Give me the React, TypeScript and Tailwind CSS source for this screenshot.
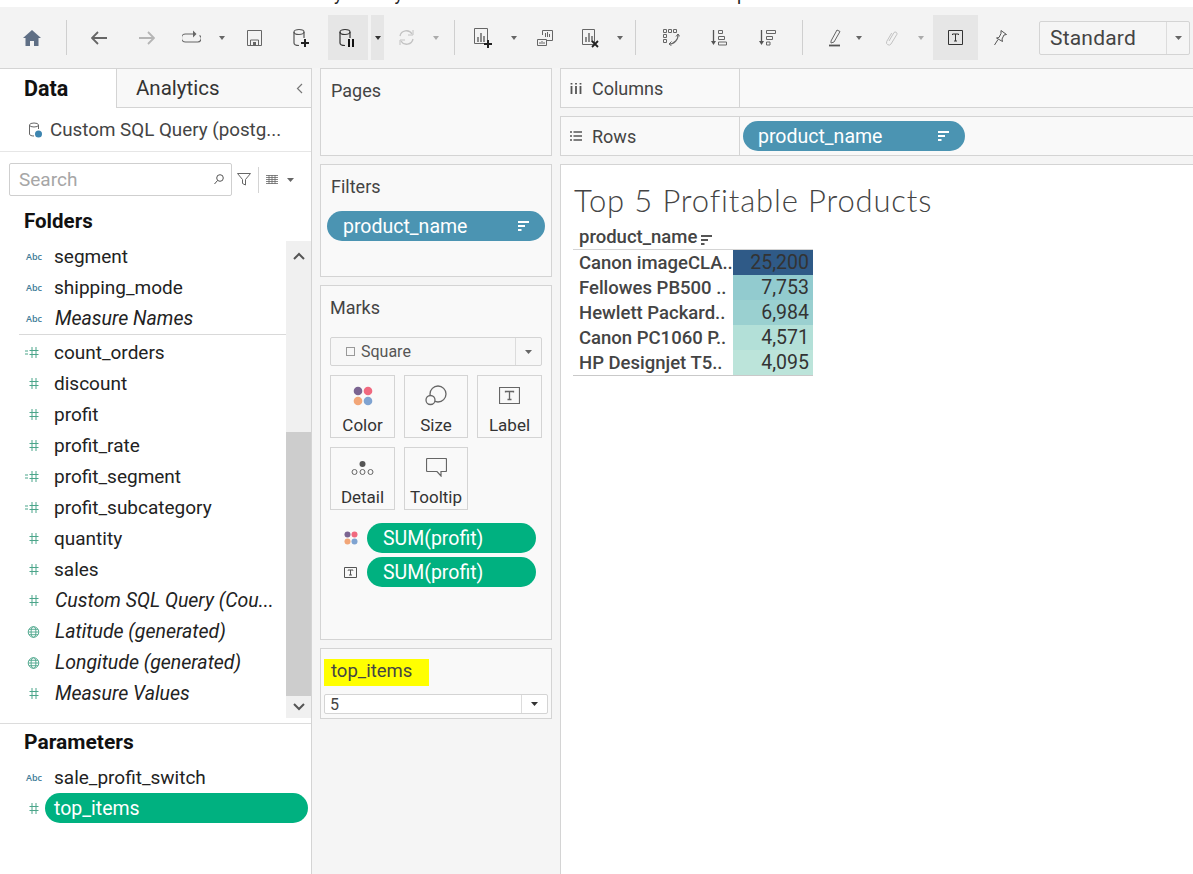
import React from "react";

const font = "font-['Roboto',sans-serif]";

function Caret({ className = "", dark = false, small = false }: { className?: string; dark?: boolean; small?: boolean }) {
  return (
    <div className={`flex items-center justify-center ${className}`}>
      <svg width={small ? 6 : 7} height={small ? 4 : 4} viewBox="0 0 8 5" preserveAspectRatio="none">
        <path d="M0 0h8L4 5z" fill={dark ? "#333" : "#666"} />
      </svg>
    </div>
  );
}

function Sep({ className = "" }: { className?: string }) {
  return <div className={`w-px h-[35px] bg-[#cfcfcf] ${className}`} />;
}

function Tb({ className = "", children }: { className?: string; children: React.ReactNode }) {
  return <div className={`flex items-center justify-center h-[45px] shrink-0 ${className}`}>{children}</div>;
}

function Db({ color = "#555" }: { color?: string }) {
  return (
    <>
      <ellipse cx="7" cy="4" rx="5" ry="2.5" fill="none" stroke={color} strokeWidth="1.2" />
      <path d="M2 4v11c0 1.5 2 2.5 5 2.5M12 4v6" fill="none" stroke={color} strokeWidth="1.2" />
    </>
  );
}

function Toolbar() {
  return (
    <div className="flex items-center h-[61px] bg-[#f3f3f3] shrink-0">
      <Tb className="w-[40px] ml-[12px]">
        <svg width="18" height="16" viewBox="0 0 18 16"><path d="M9 0L0 8h2.5v8h4.5v-5h4v5h4.5V8H18z" fill="#5f6f85" /></svg>
      </Tb>
      <Sep className="ml-[14px]" />
      <Tb className="w-[40px] ml-[12px]">
        <svg width="16" height="14" viewBox="0 0 16 14"><path d="M7 1L1 7l6 6M1 7h15" fill="none" stroke="#666" strokeWidth="1.8" /></svg>
      </Tb>
      <Tb className="w-[40px] ml-[8px]">
        <svg width="16" height="14" viewBox="0 0 16 14"><path d="M9 1l6 6-6 6M15 7H0" fill="none" stroke="#b5b5b5" strokeWidth="1.8" /></svg>
      </Tb>
      <Tb className="w-[40px] ml-[4px]">
        <svg width="19" height="13" viewBox="0 0 19 13" className="mb-[3px]"><path d="M11 4H3.500a3.500 3.500 0 0 0 0 8h12a3.500 3.500 0 0 0 2-6.500" fill="none" stroke="#666" strokeWidth="1.1" /><path d="M11 .5L14.500 4 11 7.500z" fill="#666" /></svg>
      </Tb>
      <Caret className="w-[16px] ml-[3px]" small />
      <Tb className="w-[40px] ml-[4px]">
        <svg width="15" height="16" viewBox="0 0 15 16"><path d="M.5.5h14v15H.5z" fill="none" stroke="#666" /><path d="M3.5 15.5V10h8v5.5" fill="none" stroke="#666" /><path d="M6 12h3v3.5H6z" fill="#666" /></svg>
      </Tb>
      <Tb className="w-[40px] ml-[8px]">
        <svg width="20" height="20" viewBox="0 0 20 20"><Db /><path d="M9 15h8M13 11v8" stroke="#222" strokeWidth="2" /></svg>
      </Tb>
      <Tb className="w-[40px] ml-[6px] bg-[#e6e6e6]">
        <svg width="20" height="20" viewBox="0 0 20 20"><Db color="#333" /><path d="M10 11h2v8h-2zM14 11h2v8h-2z" fill="#111" /></svg>
      </Tb>
      <Caret className="w-[13px] h-[45px] ml-[3px] bg-[#e6e6e6]" dark small />
      <Tb className="w-[40px] ml-[2px]">
        <svg width="17" height="17" viewBox="0 0 17 17"><path d="M2 7a6.5 6.5 0 0 1 12-2M15 10a6.5 6.5 0 0 1-12 2" fill="none" stroke="#c2c2c2" strokeWidth="1.3" /><path d="M15 1v5h-5M2 16v-5h5" fill="none" stroke="#c2c2c2" strokeWidth="1" /></svg>
      </Tb>
      <Caret className="w-[16px] ml-[2px] opacity-50" small />
      <Sep className="ml-[10px]" />
      <Tb className="w-[40px] ml-[10px]">
        <svg width="22" height="20" viewBox="0 0 22 20"><path d="M.5.5h13v15H.5z" fill="none" stroke="#666" /><path d="M4 9v5M7 5v9M10 8v6" stroke="#555" strokeWidth="1.3" /><path d="M10 16h8M14 12v8" stroke="#222" strokeWidth="2" /></svg>
      </Tb>
      <Caret className="w-[16px] ml-[1px]" small />
      <Tb className="w-[40px] ml-[3px]">
        <svg width="16" height="16" viewBox="0 0 16 16"><path d="M5.5 5V.5h10v10H10" fill="#f3f3f3" stroke="#666" /><path d="M.5 9.5h9v6h-9z" fill="none" stroke="#666" /><path d="M8.5 7V3M10.5 7V2M12.5 7V4M3 14v-2M5 14v-3M7 14v-2" stroke="#666" /></svg>
      </Tb>
      <Tb className="w-[40px] ml-[7px]">
        <svg width="20" height="20" viewBox="0 0 20 20"><path d="M.5 1.500h12v15H.5z" fill="none" stroke="#666" /><path d="M4 9v5M7 5v9M10 8v6" stroke="#555" strokeWidth="1.3" /><path d="M10 13l6 6M16 13l-6 6" stroke="#222" strokeWidth="1.8" /></svg>
      </Tb>
      <Caret className="w-[16px]" small />
      <Sep className="ml-[7px]" />
      <Tb className="w-[40px] ml-[15px]">
        <svg width="17" height="17" viewBox="0 0 17 17" fill="none" stroke="#666"><path d="M.5.500h3v3h-3zM5.500.500h3v3h-3zM10.500.500h3v3h-3zM.5 5.500h3v3h-3zM.5 10.500h3v3h-3z" /><path d="M15 5a9 9 0 0 1-9 10" strokeWidth="1.200" /><path d="M13 7.500L15 5l1.800 2.500M8.500 12.500L6 15l2.500 1.800" /></svg>
      </Tb>
      <Tb className="w-[40px] ml-[8px]">
        <svg width="16" height="16" viewBox="0 0 16 16"><path d="M2.500 0v13" stroke="#555" strokeWidth="1.300" /><path d="M0 11h5l-2.500 4z" fill="#555" /><path d="M7.500.5h4v3h-4zM7.500 6.500h6v3h-6zM7.500 12h8v3h-8z" fill="none" stroke="#666" /></svg>
      </Tb>
      <Tb className="w-[40px] ml-[8px]">
        <svg width="17" height="16" viewBox="0 0 17 16"><path d="M2.500 0v13" stroke="#555" strokeWidth="1.300" /><path d="M0 11h5l-2.500 4z" fill="#555" /><path d="M7.500.5h9v3h-9zM7.500 6.500h6v3h-6zM7.500 12h3.500v3H7.500z" fill="none" stroke="#666" /></svg>
      </Tb>
      <Sep className="ml-[15px]" />
      <Tb className="w-[32px] ml-[16px]">
        <svg width="12" height="18" viewBox="0 0 12 18"><path d="M2 12L8 1l3 1.500L5 13l-3 1z" fill="none" stroke="#666" /><path d="M0 16.500h11" stroke="#555" strokeWidth="1.800" /></svg>
      </Tb>
      <Caret className="w-[16px]" small />
      <Tb className="w-[32px] ml-[9px]">
        <svg width="12" height="16" viewBox="0 0 12 16"><path d="M3 11l5-8.500a1.800 1.800 0 0 1 3 1.700L5 14a2.500 2.500 0 0 1-4.300-2.500l5-8.500" fill="none" stroke="#c2c2c2" /></svg>
      </Tb>
      <Caret className="w-[16px] ml-[5px] opacity-50" small />
      <Tb className="w-[45px] ml-[4px] bg-[#e6e6e6]">
        <svg width="15" height="15" viewBox="0 0 15 15"><path d="M.5.5h14v14H.5z" fill="none" stroke="#333" /><path d="M4.500 5V4h6v1M7.500 4v7M6 11h3" fill="none" stroke="#333" /></svg>
      </Tb>
      <Tb className="w-[40px] ml-[2px]">
        <svg width="13" height="16" viewBox="0 0 13 16"><path d="M7 .5l5.500 4-2.500.5-2 4 .5 2.500L2.500 8l2.500-.5 2-4z" fill="none" stroke="#555" /><path d="M4 9.500L.5 15" stroke="#555" /></svg>
      </Tb>
      <div className="flex items-center w-[151px] h-[34px] ml-[19px] mt-[1px] border border-[#d4d4d4] rounded-[2px] bg-[#f5f5f5] shrink-0">
        <span className="flex-1 pl-[10px] pt-[1px] text-[21px] text-[#444] tracking-[0.2px]">Standard</span>
        <Caret className="w-[23px] h-full border-l border-[#dcdcdc]" />
      </div>
    </div>
  );
}

function AbcIcon() {
  return <span className="text-[9px] font-semibold text-[#3f7c98] font-['Open_Sans',sans-serif] w-[30px] pl-[2px] shrink-0">Abc</span>;
}

function HashIcon({ dashed = false }: { dashed?: boolean }) {
  return (
    <svg width="30" height="11" viewBox="0 0 30 11" className="shrink-0">
      {dashed && <path d="M1 4h3M1 7h3" stroke="#4ba58a" />}
      <path d="M6 0v11M10 0v11M3.500 3.500h9M3.500 7.500h9" stroke="#4ba58a" transform="translate(2 0)" />
    </svg>
  );
}

function GlobeIcon() {
  return (
    <svg width="30" height="12" viewBox="0 0 30 12" className="shrink-0">
      <g fill="none" stroke="#4ba58a" strokeWidth="0.9">
        <circle cx="9.500" cy="6" r="5.300" />
        <ellipse cx="9.500" cy="6" rx="2.400" ry="5.300" />
        <path d="M4.200 6h10.600M5 3.300h9M5 8.700h9" />
      </g>
    </svg>
  );
}

function Field({ icon, label, italic = false }: { icon: React.ReactNode; label: string; italic?: boolean }) {
  return (
    <div className="flex items-center h-[31px] pl-[24px]">
      {icon}
      <span className={`pt-[1px] text-[#222] whitespace-nowrap ${italic ? "italic text-[19.5px] pl-[1px]" : "text-[19px]"}`}>{label}</span>
    </div>
  );
}

function DataPane() {
  return (
    <div className="flex flex-col w-[312px] shrink-0 bg-white border-r border-[#d4d4d4]">
      <div className="flex h-[40px] border-t border-[#d4d4d4] shrink-0">
        <div className="w-[116px] pl-[24px] pt-[1px] flex items-center font-bold text-[21.5px] text-[#111]">Data</div>
        <div className="flex-1 flex items-center justify-between pl-[19px] pr-[8px] bg-[#f8f8f8] border-l border-b border-[#d4d4d4]">
          <span className="text-[20.5px] text-[#333]">Analytics</span>
          <svg width="7" height="11" viewBox="0 0 7 11"><path d="M6 1L1.500 5.500 6 10" fill="none" stroke="#777" strokeWidth="1.200" /></svg>
        </div>
      </div>
      <div className="flex items-center h-[44px] pl-[28px] border-b border-[#e6e6e6] shrink-0">
        <svg width="22" height="16" viewBox="0 0 22 16" className="shrink-0">
          <ellipse cx="6" cy="3" rx="4.500" ry="2" fill="none" stroke="#666" />
          <path d="M1.500 3v9c0 1.300 2 2 4.500 2M10.500 3v4" fill="none" stroke="#666" />
          <circle cx="10.500" cy="12" r="3.500" fill="#3d85b0" />
        </svg>
        <span className="pt-[1px] text-[18.8px] text-[#444] whitespace-nowrap">Custom SQL Query (postg...</span>
      </div>
      <div className="flex items-center h-[33px] mt-[11px] pl-[9px] shrink-0">
        <div className="flex items-center justify-between w-[223px] h-full border border-[#cfcfcf] rounded-[2px] pl-[9px] pr-[7px]">
          <span className="pt-[1px] text-[19px] text-[#a6a6a6]">Search</span>
          <svg width="10" height="11" viewBox="0 0 10 11"><circle cx="6" cy="4" r="3.300" fill="none" stroke="#555" /><path d="M3.500 6.500L.5 10" stroke="#555" /></svg>
        </div>
        <svg width="14" height="13" viewBox="0 0 14 13" className="ml-[5px]"><path d="M.5.5h13L8.500 6.500V12l-3-1.500v-4z" fill="none" stroke="#666" /></svg>
        <div className="w-px h-[26px] bg-[#d4d4d4] ml-[7px]" />
        <svg width="12" height="9" viewBox="0 0 12 9" className="ml-[7px]"><path d="M0 .5h12M0 2.500h12M0 4.500h12M0 6.500h12M0 8.500h12M3 0v9M6 0v9M9 0v9" stroke="#666" strokeWidth="0.800" /></svg>
        <Caret className="w-[8px] ml-[8px]" />
      </div>
      <div className="h-[45px] pl-[24px] pt-[13px] font-bold text-[20.5px] leading-[24px] text-[#111] shrink-0">Folders</div>
      <div className="flex h-[477px] shrink-0">
        <div className="flex-1 min-w-0">
          <Field icon={<AbcIcon />} label="segment" />
          <Field icon={<AbcIcon />} label="shipping_mode" />
          <Field icon={<AbcIcon />} label="Measure Names" italic />
          <div className="ml-[19px] h-px bg-[#d9d9d9] mb-[2px]" />
          <Field icon={<HashIcon dashed />} label="count_orders" />
          <Field icon={<HashIcon />} label="discount" />
          <Field icon={<HashIcon />} label="profit" />
          <Field icon={<HashIcon />} label="profit_rate" />
          <Field icon={<HashIcon dashed />} label="profit_segment" />
          <Field icon={<HashIcon dashed />} label="profit_subcategory" />
          <Field icon={<HashIcon />} label="quantity" />
          <Field icon={<HashIcon />} label="sales" />
          <Field icon={<HashIcon />} label="Custom SQL Query (Cou..." italic />
          <Field icon={<GlobeIcon />} label="Latitude (generated)" italic />
          <Field icon={<GlobeIcon />} label="Longitude (generated)" italic />
          <Field icon={<HashIcon />} label="Measure Values" italic />
        </div>
        <div className="flex flex-col w-[25px] shrink-0 bg-[#f0f0f0]">
          <div className="flex items-center justify-center h-[30px]">
            <svg width="12" height="8" viewBox="0 0 12 8"><path d="M1 7l5-5 5 5" fill="none" stroke="#555" strokeWidth="2" /></svg>
          </div>
          <div className="h-[161px]" />
          <div className="h-[264px] bg-[#cdcdcd]" />
          <div className="flex-1 flex items-center justify-center">
            <svg width="12" height="8" viewBox="0 0 12 8"><path d="M1 1l5 5 5-5" fill="none" stroke="#555" strokeWidth="2" /></svg>
          </div>
        </div>
      </div>
      <div className="h-[6px] border-b border-[#dcdcdc] shrink-0" />
      <div className="h-[37px] pl-[24px] pt-[6px] font-bold text-[21px] leading-[24px] text-[#111] shrink-0">Parameters</div>
      <div className="pt-[1px]">
        <Field icon={<AbcIcon />} label="sale_profit_switch" />
        <div className="flex items-center h-[30px] pl-[24px] pr-[3px]">
          <HashIcon />
          <div className="flex items-center flex-1 h-[30px] -ml-[9px] pl-[9px] pt-[1px] rounded-full bg-[#00b180] text-white text-[19.5px]">top_items</div>
        </div>
      </div>
    </div>
  );
}

function ColorDots({ size }: { size: number }) {
  return (
    <svg width={size} height={size} viewBox="0 0 20 20">
      <circle cx="5" cy="5" r="4.300" fill="#7b6491" />
      <circle cx="15" cy="5" r="4.300" fill="#f0697f" />
      <circle cx="5" cy="15" r="4.300" fill="#f2a678" />
      <circle cx="15" cy="15" r="4.300" fill="#7fa3d1" />
    </svg>
  );
}

function MarkBtn({ icon, label }: { icon: React.ReactNode; label: string }) {
  return (
    <div className="flex flex-col items-center h-[63px] border border-[#d4d4d4] bg-[#f9f9f9]">
      <div className="flex items-center justify-center h-[39px]">{icon}</div>
      <span className="text-[17px] leading-[20px] text-[#333]">{label}</span>
    </div>
  );
}

function Pill({ label, className = "" }: { label: string; className?: string }) {
  return <div className={`flex items-center h-[30px] pl-[16px] pt-[1px] rounded-full bg-[#00b180] text-white text-[19.5px] ${className}`}>{label}</div>;
}

function SortLines({ color, className = "" }: { color: string; className?: string }) {
  return (
    <svg width="11" height="10" viewBox="0 0 11 10" className={className}>
      <path d="M0 1h11M0 5h7M0 9h3.500" stroke={color} strokeWidth="1.800" />
    </svg>
  );
}

function MiddlePane() {
  return (
    <div className="flex flex-col gap-[8px] w-[232px] ml-[8px] shrink-0">
      <div className="h-[88px] border border-[#d4d4d4] bg-[#f9f9f9] pl-[10px] pt-[10px] text-[18px] leading-[24px] text-[#444]">Pages</div>
      <div className="h-[113px] border border-[#d4d4d4] bg-[#f9f9f9] pt-[10px]">
        <div className="pl-[10px] text-[18px] leading-[24px] text-[#444]">Filters</div>
        <div className="flex items-center justify-between h-[30px] mt-[12px] ml-[6px] mr-[6px] pl-[16px] pr-[16px] rounded-full bg-[#4b94b2] text-white text-[19.5px]">
          <span className="pt-[1px]">product_name</span>
          <SortLines color="#fff" />
        </div>
      </div>
      <div className="h-[355px] border border-[#d4d4d4] bg-[#f9f9f9] pt-[10px] px-[9px]">
        <div className="text-[18px] leading-[24px] text-[#444]">Marks</div>
        <div className="flex items-center h-[29px] mt-[17px] border border-[#d4d4d4] rounded-[2px] bg-[#f7f7f7]">
          <div className="flex-1 flex items-center pl-[15px] gap-[6px] text-[16px] text-[#555]">
            <div className="w-[9px] h-[9px] border border-[#999]" />
            Square
          </div>
          <Caret className="w-[26px] h-full border-l border-[#dcdcdc]" />
        </div>
        <div className="grid grid-cols-[65px_64px_65px] gap-x-[9px] gap-y-[9px] mt-[9px]">
          <MarkBtn icon={<ColorDots size={20} />} label="Color" />
          <MarkBtn
            icon={
              <svg width="22" height="21" viewBox="0 0 22 21" fill="none" stroke="#666" strokeWidth="1.300">
                <circle cx="13" cy="9" r="8" />
                <circle cx="5.500" cy="15" r="4.500" fill="#f9f9f9" />
              </svg>
            }
            label="Size"
          />
          <MarkBtn
            icon={
              <svg width="21" height="17" viewBox="0 0 21 17" fill="none" stroke="#666">
                <path d="M.5.500h20v16H.5z" strokeWidth="1.200" />
                <path d="M6.500 5.500v-1h8v1M10.500 4.500v8M8.500 12.500h4" strokeWidth="1.300" />
              </svg>
            }
            label="Label"
          />
          <MarkBtn
            icon={
              <svg width="23" height="14" viewBox="0 0 23 14">
                <circle cx="11.500" cy="3" r="3" fill="#555" />
                <g fill="none" stroke="#666"><circle cx="3.500" cy="11" r="2.500" /><circle cx="11.500" cy="11" r="2.500" /><circle cx="19.500" cy="11" r="2.500" /></g>
              </svg>
            }
            label="Detail"
          />
          <MarkBtn
            icon={
              <svg width="21" height="19" viewBox="0 0 21 19"><path d="M1.500.5h18a1 1 0 0 1 1 1v11a1 1 0 0 1-1 1H15v4.500L11 13.500H1.500a1 1 0 0 1-1-1v-11a1 1 0 0 1 1-1z" fill="none" stroke="#666" strokeWidth="1.200" /></svg>
            }
            label="Tooltip"
          />
        </div>
        <div className="flex items-center h-[30px] mt-[13px]">
          <div className="w-[37px] pl-[14px]"><ColorDots size={14} /></div>
          <Pill label="SUM(profit)" className="w-[169px]" />
        </div>
        <div className="flex items-center h-[30px] mt-[4px]">
          <div className="w-[37px] pl-[14px]">
            <svg width="13" height="11" viewBox="0 0 13 11" fill="none" stroke="#555"><path d="M.5.500h12v10H.5z" /><path d="M4 3.500v-.500h5v.500M6.500 3v5M5 8h3" /></svg>
          </div>
          <Pill label="SUM(profit)" className="w-[169px]" />
        </div>
      </div>
      <div className="h-[71px] border border-[#d4d4d4] bg-[#f9f9f9] pt-[10px] px-[3px]">
        <div className="w-[105px] h-[27px] pl-[7px] bg-[#ffff00] text-[18.5px] leading-[24px] text-[#444]">top_items</div>
        <div className="flex items-center h-[20px] mt-[8px] border border-[#d4d4d4] rounded-[2px] bg-white">
          <span className="flex-1 pl-[5px] pt-[2px] text-[16px] leading-[18px] text-[#444]">5</span>
          <Caret className="w-[26px] h-full border-l border-[#dcdcdc]" dark />
        </div>
      </div>
    </div>
  );
}

const rows = [
  { name: "Canon imageCLA..", value: "25,200", bg: "bg-[#2f5a87]" },
  { name: "Fellowes PB500 ..", value: "7,753", bg: "bg-[#92cbcf]" },
  { name: "Hewlett Packard..", value: "6,984", bg: "bg-[#9ad0d0]" },
  { name: "Canon PC1060 P..", value: "4,571", bg: "bg-[#b3e0d8]" },
  { name: "HP Designjet T5..", value: "4,095", bg: "bg-[#bce4da]" },
];

function Shelf({ icon, label, children }: { icon: React.ReactNode; label: string; children?: React.ReactNode }) {
  return (
    <div className="flex h-[40px] border border-r-0 border-[#d4d4d4] bg-[#f9f9f9]">
      <div className="flex items-center w-[179px] pl-[9px] gap-[10px] border-r border-[#d4d4d4] text-[18px] text-[#444] shrink-0">
        {icon}
        {label}
      </div>
      {children}
    </div>
  );
}

function MainPane() {
  return (
    <div className="flex flex-col flex-1 gap-[8px] ml-[8px] min-w-0">
      <Shelf
        icon={<svg width="12" height="11" viewBox="0 0 12 11"><path d="M1.500 3v8M6 3v8M10.500 3v8" stroke="#555" strokeWidth="1.800" /><path d="M1.500 0v1.500M6 0v1.500M10.500 0v1.500" stroke="#555" strokeWidth="1.800" /></svg>}
        label="Columns"
      />
      <Shelf
        icon={<svg width="12" height="10" viewBox="0 0 12 10"><path d="M0 1h2M3.500 1H12M0 5h2M3.500 5H12M0 9h2M3.500 9H12" stroke="#555" strokeWidth="1.500" /></svg>}
        label="Rows"
      >
        <div className="flex items-center justify-between w-[222px] h-[30px] mt-[4px] ml-[3px] pl-[15px] pr-[16px] rounded-full bg-[#4b94b2] text-white text-[19.5px]">
          <span className="pt-[1px]">product_name</span>
          <SortLines color="#fff" />
        </div>
      </Shelf>
      <div className="flex-1 border-l border-t border-[#d4d4d4] bg-white pl-[13px] pt-[15px]">
        <div className="text-[31px] leading-[40px] font-light text-[#444] font-['Lato',sans-serif] tracking-[0.85px]">Top 5 Profitable Products</div>
        <div className="w-[240px] -ml-px mt-[5px] border-b border-[#c9c9c9]">
          <div className="flex items-center h-[25px] pl-[6px] pt-[2px] border-b border-[#d4d4d4] text-[18.5px] font-medium text-[#444]">
            product_name
            <SortLines color="#555" className="ml-[4px] mt-[3px]" />
          </div>
          {rows.map((r) => (
            <div key={r.name} className="flex h-[25px]">
              <div className="w-[160px] pl-[6px] pt-[1px] text-[18.5px] leading-[24px] font-medium text-[#444] whitespace-nowrap overflow-hidden">{r.name}</div>
              <div className={`w-[80px] pr-[4px] text-right text-[19.5px] leading-[25px] text-[#333] ${r.bg}`}>{r.value}</div>
            </div>
          ))}
        </div>
      </div>
    </div>
  );
}

export default function App() {
  return (
    <div className={`flex flex-col w-[1193px] h-[874px] overflow-hidden bg-white ${font}`}>
      {/* tail of a cut-off sentence above the app */}
      <div className="flex h-[7px] shrink-0 overflow-hidden bg-white text-[18px] leading-[20px] text-[#222]">
        <span className="ml-[334px] -mt-[16px]">y</span>
        <span className="ml-[52px] -mt-[16px]">y</span>
        <span className="ml-[334px] -mt-[16px]">p</span>
      </div>
      <Toolbar />
      <div className="flex flex-1 min-h-0 bg-[#f5f5f5]">
        <DataPane />
        <MiddlePane />
        <MainPane />
      </div>
    </div>
  );
}
